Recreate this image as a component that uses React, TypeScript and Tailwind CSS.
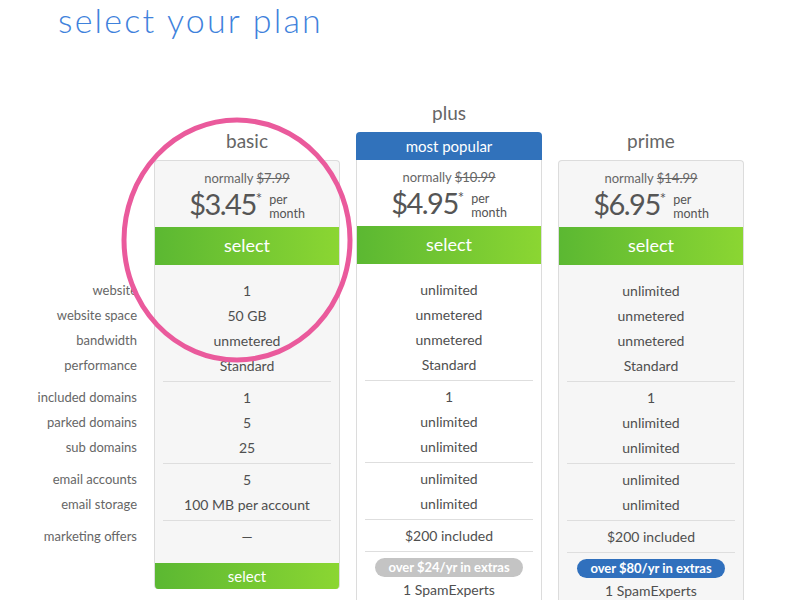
import React from "react";

type Plan = {
  name: string;
  normally: string;
  price: string;
  groups: string[][];
  popular?: boolean;
  shaded: boolean;
  extras?: { text: string; tone: "gray" | "blue" };
};

const labels: string[][] = [
  ["website", "website space", "bandwidth", "performance"],
  ["included domains", "parked domains", "sub domains"],
  ["email accounts", "email storage"],
  ["marketing offers"],
];

const plans: Plan[] = [
  {
    name: "basic",
    normally: "$7.99",
    price: "$3.45",
    shaded: true,
    groups: [["1", "50 GB", "unmetered", "Standard"], ["1", "5", "25"], ["5", "100 MB per account"], ["—"]],
  },
  {
    name: "plus",
    normally: "$10.99",
    price: "$4.95",
    shaded: false,
    popular: true,
    extras: { text: "over $24/yr in extras", tone: "gray" },
    groups: [
      ["unlimited", "unmetered", "unmetered", "Standard"],
      ["1", "unlimited", "unlimited"],
      ["unlimited", "unlimited"],
      ["$200 included"],
    ],
  },
  {
    name: "prime",
    normally: "$14.99",
    price: "$6.95",
    shaded: true,
    extras: { text: "over $80/yr in extras", tone: "blue" },
    groups: [
      ["unlimited", "unmetered", "unmetered", "Standard"],
      ["1", "unlimited", "unlimited"],
      ["unlimited", "unlimited"],
      ["$200 included"],
    ],
  },
];

function PlanCard({ plan }: { plan: Plan }) {
  const isBasic = !plan.extras;
  return (
    <div className="flex w-[186px] flex-col">
      {/* name + optional ribbon */}
      <div className="flex h-[70px] flex-col justify-end">
        <div className="mb-[7px] text-center text-[19px] leading-[24px] text-[#666]">{plan.name}</div>
        {plan.popular && (
          <div className="flex h-[28px] items-center justify-center rounded-t-[4px] bg-[#3172bb] text-[15px] text-white">
            most popular
          </div>
        )}
      </div>

      <div
        className={`flex flex-col overflow-hidden border-x border-[#dcdcdc] ${
          plan.popular ? "" : "rounded-t-[4px] border-t"
        } ${isBasic ? "rounded-b-[4px]" : "pb-[40px]"} ${plan.shaded ? "bg-[#f6f6f6]" : "bg-white"}`}
      >
        {/* price */}
        <div className="flex h-[66px] flex-col items-center pt-[10px]">
          <div className="text-[13px] leading-[15px] text-[#666]">
            normally <span className="line-through">{plan.normally}</span>
          </div>
          <div className="mt-[2px] flex h-[32px] items-start text-[#555]">
            <span className="text-[29px] leading-[32px] tracking-[-1.5px]">{plan.price}</span>
            <span className="mt-[3px] text-[15px] leading-[14px]">*</span>
            <div className="ml-[7px] mt-[5px] flex flex-col text-[12.5px] leading-[14px]">
              <span>per</span>
              <span>month</span>
            </div>
          </div>
        </div>

        <button className="flex h-[38px] items-center justify-center bg-linear-to-r from-[#5bb832] to-[#8bd632] text-[18px] text-white">
          select
        </button>

        {/* feature rows */}
        <div className="pt-[10px]">
          {plan.groups.map((g, gi) => (
            <div key={gi} className={`mx-[8px] py-[3px] ${gi > 0 ? "border-t border-[#dedede]" : ""}`}>
              {g.map((v, vi) => (
                <div key={vi} className="flex h-[25px] items-center justify-center text-[14px] text-[#4f4f4f]">
                  {v}
                </div>
              ))}
            </div>
          ))}
          {plan.extras && (
            <div className="mx-[8px] flex flex-col items-center border-t border-[#dedede] pt-[6px]">
              <div
                className={`flex h-[19px] items-center rounded-full px-[13px] text-[13px] font-bold text-white ${
                  plan.extras.tone === "blue" ? "bg-[#3070bd]" : "bg-[#c4c4c4]"
                }`}
              >
                {plan.extras.text}
              </div>
              <div className="flex h-[25px] items-center text-[14px] text-[#4f4f4f]">1 SpamExperts</div>
            </div>
          )}
        </div>

        {isBasic && (
          <button className="mt-[11px] flex h-[26px] items-center justify-center bg-linear-to-r from-[#5bb832] to-[#8bd632] text-[15px] text-white">
            select
          </button>
        )}
      </div>
    </div>
  );
}

export default function App() {
  return (
    <div
      className="relative h-[600px] w-[800px] overflow-hidden bg-white"
      style={{ fontFamily: "Lato, 'Open Sans', sans-serif" }}
    >
      <h1 className="pl-[58px] text-[34px] font-light leading-[1.2] tracking-[2.2px] text-[#3f82dc]">select your plan</h1>

      <div className="mt-[49px] flex gap-4">
        {/* labels */}
        <div className="w-[138px] pr-[1px] text-right text-[13px] text-[#666]">
          <div className="h-[185px]" />
          {labels.map((g, gi) => (
            <div key={gi} className={`py-[3px] ${gi > 0 ? "border-t border-transparent" : ""}`}>
              {g.map((l) => (
                <div key={l} className="flex h-[25px] items-center justify-end">
                  {l}
                </div>
              ))}
            </div>
          ))}
        </div>

        {plans.map((p) => (
          <PlanCard key={p.name} plan={p} />
        ))}
      </div>

      {/* highlight ring */}
      <svg className="pointer-events-none absolute left-0 top-0" width="800" height="600">
        <ellipse cx="237" cy="240" rx="113" ry="120" fill="none" stroke="#ea5a9c" strokeWidth="5" />
      </svg>
    </div>
  );
}
